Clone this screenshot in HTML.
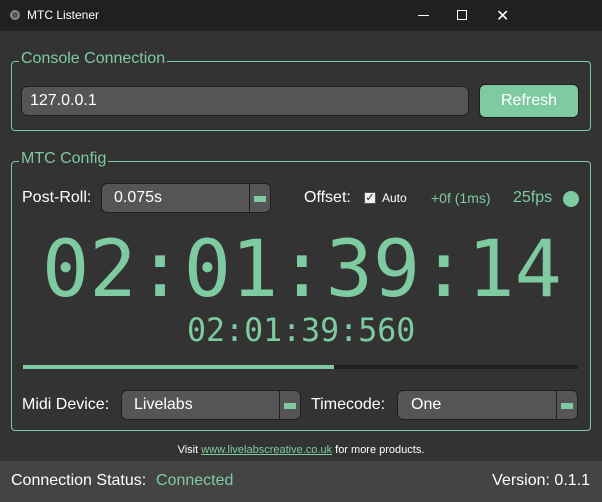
<!DOCTYPE html>
<html><head><meta charset="utf-8"><style>
*{box-sizing:border-box;margin:0;padding:0}
body{width:602px;height:502px;background:#333;font-family:"Liberation Sans",sans-serif;color:#fff;position:relative;overflow:hidden}
.a{position:absolute}
.t{font-size:16px;white-space:nowrap}
.g{color:#7ecba1}
.fs{position:absolute;border:1px solid #7ecba1;border-radius:4px}
.lg{position:absolute;background:#333;color:#7ecba1;font-size:16px;padding:0 2px;line-height:18px}
.box{position:absolute;background:#555;border:1px solid #1f1f1f;border-radius:6px}
.dd{position:absolute;top:0;right:0;bottom:0;width:21px;border-left:1px solid #1f1f1f}
.dd:after{content:"";position:absolute;left:4px;top:12px;width:12px;height:6px;background:#7ecba1}
.mono{font-family:"DejaVu Sans Mono",monospace;color:#7ecba1;white-space:nowrap}
</style></head><body>
<div class="a" style="left:0;top:0;width:602px;height:31px;background:#202020"></div>
<div class="a" style="left:10px;top:10px;width:10px;height:10px;border-radius:50%;background:#555;border:2px solid #888"></div>
<div class="a t" style="left:27px;top:8px;font-size:12px">MTC Listener</div>
<div class="a" style="left:418px;top:15px;width:11px;height:1px;background:#fff"></div>
<div class="a" style="left:457px;top:10px;width:10px;height:10px;border:1px solid #fff"></div>
<div class="a" style="left:496px;top:6px;font-size:16px;color:#fff">✕</div>

<div class="fs" style="left:11px;top:61px;width:580px;height:70px"></div>
<div class="lg" style="left:19px;top:50px">Console Connection</div>
<div class="box" style="left:21px;top:86px;width:448px;height:30px"></div>
<div class="a t" style="left:30px;top:92px">127.0.0.1</div>
<div class="a" style="left:479px;top:84px;width:100px;height:34px;background:#7ecba1;border:1px solid #1f1f1f;border-radius:6px;text-align:center;line-height:32px;font-size:16px">Refresh</div>

<div class="fs" style="left:11px;top:161px;width:580px;height:270px"></div>
<div class="lg" style="left:19px;top:150px">MTC Config</div>
<div class="a t" style="left:22px;top:189px">Post-Roll:</div>
<div class="box" style="left:101px;top:183px;width:170px;height:30px"><div class="dd"></div></div>
<div class="a t" style="left:114px;top:189px">0.075s</div>
<div class="a t" style="left:304px;top:189px">Offset:</div>
<div class="a" style="left:364px;top:192px;width:12px;height:12px;background:#eee;border:1px solid #555;color:#222;font-size:11px;line-height:10px;text-align:center">✓</div>
<div class="a t" style="left:382px;top:191px;font-size:12px">Auto</div>
<div class="a t g" style="left:431px;top:190px;font-size:14px">+0f (1ms)</div>
<div class="a t g" style="left:513px;top:189px">25fps</div>
<div class="a" style="left:563px;top:191px;width:16px;height:16px;border-radius:50%;background:#7ecba1"></div>

<div class="a mono" style="left:42px;top:222px;font-size:78.5px;line-height:94px">02:01:39:14</div>
<div class="a mono" style="left:187px;top:312px;font-size:31.6px;line-height:38px">02:01:39:560</div>

<div class="a" style="left:23px;top:365px;width:555px;height:4px;background:#1f1f1f"></div>
<div class="a" style="left:23px;top:365px;width:311px;height:4px;background:#7ecba1"></div>

<div class="a t" style="left:22px;top:396px">Midi Device:</div>
<div class="box" style="left:121px;top:390px;width:180px;height:30px"><div class="dd"></div></div>
<div class="a t" style="left:134px;top:396px">Livelabs</div>
<div class="a t" style="left:311px;top:396px">Timecode:</div>
<div class="box" style="left:397px;top:390px;width:181px;height:30px"><div class="dd"></div></div>
<div class="a t" style="left:411px;top:396px">One</div>

<div class="a t" style="left:0;width:602px;top:444px;text-align:center;font-size:11px">Visit <span class="g" style="text-decoration:underline">www.livelabscreative.co.uk</span> for more products.</div>

<div class="a" style="left:0;top:461px;width:602px;height:41px;background:#444"></div>
<div class="a t" style="left:11px;top:472px">Connection Status:</div>
<div class="a t g" style="left:156px;top:472px">Connected</div>
<div class="a t" style="right:12px;top:472px">Version: 0.1.1</div>
</body></html>
